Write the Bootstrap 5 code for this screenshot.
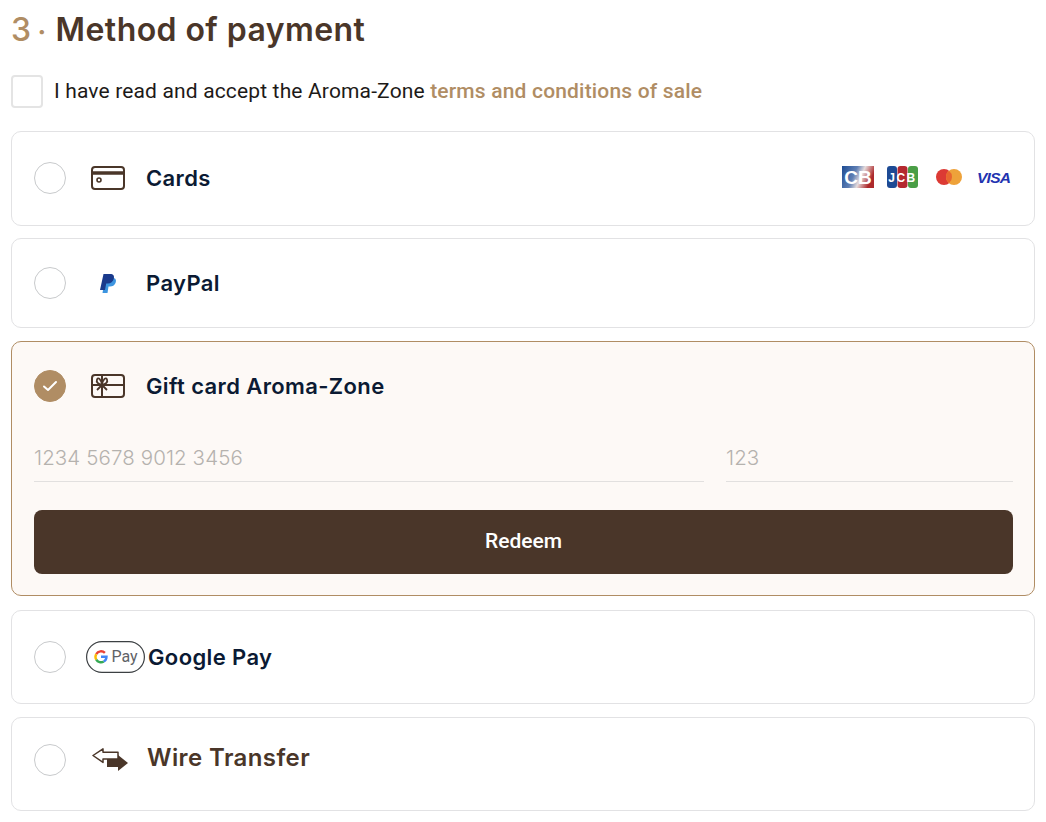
<!DOCTYPE html>
<html lang="en">
<head>
  <meta charset="UTF-8" />
  <meta name="viewport" content="width=device-width, initial-scale=1.0"/>
  <title>Method of payment</title>
  <link href="https://cdn.jsdelivr.net/npm/bootstrap@5.3.0/dist/css/bootstrap.min.css" rel="stylesheet">
  <style>
    body {
      background-color: #fff;
      padding: 0 11px;
      font-family: Roboto, sans-serif;
      color: #1d1a18;
    }
    .pay-title {
      height: 62px;
      margin: 0;
      font-family: Inter, sans-serif;
      font-size: 32px;
      font-weight: 600;
      color: #4a3629;
      letter-spacing: .42px;
      line-height: 60px;
    }
    .pay-step { color: #b08d64; font-weight: 500; }
    .pay-dot { color: #b08d64; margin: 0 9px 0 6px; font-weight: 700; font-size: 26px; }
    .terms-row { height: 32px; margin-top: 13px; margin-bottom: 24px; }
    .terms-box {
      width: 32px;
      height: 33px;
      border: 2px solid #e4e4e4;
      border-radius: 4px;
      margin-right: 11px;
    }
    .terms-text { font-size: 21px; letter-spacing: .15px; padding-top: 2px; }
    .terms-text a { color: #b08d64; font-weight: 500; text-decoration: none; letter-spacing: .18px; }
    .pay-item {
      border: 1px solid #e2e2e4;
      border-radius: 10px;
      padding: 0 21px 0 22px;
      margin-bottom: 12px;
    }
    .pay-h94 { height: 95px; padding-bottom: 1px; }
    .pay-h90 { height: 90px; margin-bottom: 13px; }
    .pay-h95 { height: 94px; margin-bottom: 13px; }
    .pay-wire { padding-bottom: 8px; }
    .pay-open {
      height: 255px;
      margin-bottom: 14px;
      background-color: #fdf9f6;
      border-color: #b08d64;
    }
    .open-head { height: 88px; }
    .pay-radio {
      width: 32px;
      height: 32px;
      flex: none;
      border: 1px solid #c8cacc;
      border-radius: 50%;
      background: #fff;
    }
    .pay-radio-on {
      background: #b08d64;
      border-color: #b08d64;
    }
    .icon-slot {
      width: 80px;
      flex: none;
      padding-left: 4px;
    }
    .slot-wire { padding-left: 8px; }
    .pay-label {
      font-family: Inter, sans-serif;
      font-size: 22px;
      font-weight: 600;
      color: #0b1a33;
      letter-spacing: .38px;
    }
    .label-wire { font-size: 24px; color: #4a3629; letter-spacing: .4px; margin-top: -5px; margin-left: 1px; }
    .gift-field {
      height: 52px;
      border: 0;
      border-bottom: 1px solid #e2e0df;
      background: transparent;
      padding: 4px 0 0;
      font-family: Inter, sans-serif;
      font-weight: 300;
      font-size: 20.5px;
      letter-spacing: .1px;
      outline: 0;
    }
    .gift-field::placeholder { color: #b5b2ae; opacity: 1; }
    .field-num { width: 670px; }
    .field-cvv { width: 287px; }
    .btn-redeem {
      height: 64px;
      margin-top: 28px;
      background-color: #4a3629;
      border: 0;
      border-radius: 8px;
      color: #fff;
      font-size: 21px;
      font-weight: 500;
    }
    .gpay-mark {
      width: 59px;
      height: 32px;
      flex: none;
      margin: 0 3px 0 20px;
    }
    .card-logos { margin-top: -3px; margin-right: 2px; }
    .card-logos svg { display: block; }
    .gap-jcb { margin-left: 13px; }
    .gap-mc { margin-left: 18px; }
    .gap-visa { margin-left: 16px; }
    .logo-text { font-family: "Liberation Sans", sans-serif; font-weight: 700; }
  </style>
</head>
<body>
  <h2 class="pay-title"><span class="pay-step">3</span><span class="pay-dot">·</span>Method of payment</h2>

  <div class="terms-row d-flex align-items-center">
    <div class="terms-box"></div>
    <div class="terms-text">I have read and accept the Aroma-Zone <a href="#">terms and conditions of sale</a></div>
  </div>

  <!-- Cards -->
  <div class="pay-item pay-h94 d-flex align-items-center">
    <div class="pay-radio"></div>
    <div class="icon-slot d-flex justify-content-center">
      <svg width="34" height="24" viewBox="0 0 34 24" fill="none" stroke="#4a3629" stroke-width="2">
        <rect x="1" y="1" width="32" height="22" rx="3"/>
        <path d="M1 7h32" stroke-width="3.500"/>
        <circle cx="8" cy="14" r="2" stroke-width="1.600"/>
      </svg>
    </div>
    <div class="pay-label">Cards</div>
    <div class="card-logos ms-auto d-flex align-items-center">
      <svg width="32" height="22" viewBox="0 0 32 22">
        <defs><linearGradient id="cbg" x1="0" x2="1" y1="0" y2="0.3"><stop offset="0" stop-color="#1c4b93"/><stop offset=".45" stop-color="#5f7fb4"/><stop offset=".68" stop-color="#e6dcdc"/><stop offset="1" stop-color="#ad2a2c"/></linearGradient></defs>
        <rect width="32" height="22" fill="url(#cbg)"/>
        <text class="logo-text" x="16" y="18" font-size="19" fill="#fff" text-anchor="middle">CB</text>
      </svg>
      <svg class="gap-jcb" width="31" height="22" viewBox="0 0 31 22">
        <rect width="10" height="22" rx="3" fill="#1d4a94"/>
        <rect x="10.500" width="10" height="22" rx="3" fill="#b4282f"/>
        <rect x="21" width="10" height="22" rx="3" fill="#4a9e46"/>
        <text class="logo-text" x="15.500" y="15.500" font-size="12" fill="#fff" text-anchor="middle" letter-spacing="1.500">JCB</text>
      </svg>
      <svg class="gap-mc" width="26" height="16" viewBox="0 0 26 16">
        <circle cx="8" cy="8" r="8" fill="#dc3a34"/>
        <circle cx="18" cy="8" r="8" fill="#eea23a"/>
        <path d="M13 1.750a8 8 0 0 1 0 12.500a8 8 0 0 1 0-12.500z" fill="#e8662f"/>
      </svg>
      <svg class="gap-visa" width="33" height="16" viewBox="0 0 33 16">
        <text class="logo-text" x="-1" y="13.500" font-size="15.500" font-style="italic" fill="#2233b0" textLength="34">VISA</text>
      </svg>
    </div>
  </div>

  <!-- PayPal -->
  <div class="pay-item pay-h90 d-flex align-items-center">
    <div class="pay-radio"></div>
    <div class="icon-slot d-flex justify-content-center">
      <svg width="16" height="19" viewBox="0 0 16 19">
        <path d="M5 4h8c3 0 3.500 2.500 2.500 5c-1 2.500-3 3.500-5.500 3.500H8.500L7.500 19H2.500z" fill="#3d95e0"/>
        <path d="M3.500 0h6.500c3.500 0 4.500 2 3.800 4.800c-.8 3.200-3 4.800-6 4.800H6.200L5 16H0z" fill="#1a3a8c"/>
      </svg>
    </div>
    <div class="pay-label">PayPal</div>
  </div>

  <!-- Gift card -->
  <div class="pay-item pay-open">
    <div class="open-head d-flex align-items-center">
      <div class="pay-radio pay-radio-on d-flex align-items-center justify-content-center">
        <svg width="16" height="12" viewBox="0 0 16 12" fill="none" stroke="#fff" stroke-width="2" stroke-linecap="round" stroke-linejoin="round">
          <path d="M2 6.500l4 3.500 8-8"/>
        </svg>
      </div>
      <div class="icon-slot d-flex justify-content-center">
        <svg width="34" height="26" viewBox="0 0 34 26" fill="none" stroke="#4a3629" stroke-width="2">
          <rect x="1" y="2" width="32" height="22" rx="3"/>
          <path d="M1 12h32M11 2v22"/>
          <path d="M11 12c-4-1-6-3-5-5.500s4-1 5 5.500c1-6.500 4-8 5-5.500s-1 4.500-5 5.500zM11 12l-5 5M11 12l5 5" stroke-width="1.800"/>
        </svg>
      </div>
      <div class="pay-label">Gift card Aroma-Zone</div>
    </div>
    <div class="d-flex justify-content-between">
      <input class="gift-field field-num" type="text" placeholder="1234 5678 9012 3456">
      <input class="gift-field field-cvv" type="text" placeholder="123">
    </div>
    <button class="btn btn-redeem w-100" type="button">Redeem</button>
  </div>

  <!-- Google Pay -->
  <div class="pay-item pay-h95 d-flex align-items-center">
    <div class="pay-radio"></div>
    <svg class="gpay-mark" viewBox="0 0 59 32">
      <rect x=".6" y=".6" width="57.800" height="30.800" rx="15.400" fill="#fff" stroke="#3c4043" stroke-width="1.200"/>
      <g fill="none" stroke-width="2.400">
        <path d="M10.240 13.050A5.500 5.500 0 0 1 18.890 11.910" stroke="#ea4335"/>
        <path d="M10.240 13.050A5.500 5.500 0 0 0 10.240 18.550" stroke="#fbbc04"/>
        <path d="M10.240 18.550A5.500 5.500 0 0 0 17.750 20.560" stroke="#34a853"/>
        <path d="M17.750 20.560A5.500 5.500 0 0 0 20.500 15.800H15" stroke="#4285f4"/>
      </g>
      <text x="25.500" y="21" font-family="Roboto, sans-serif" font-size="16" fill="#5f6368">Pay</text>
    </svg>
    <div class="pay-label">Google Pay</div>
  </div>

  <!-- Wire transfer -->
  <div class="pay-item pay-h95 pay-wire d-flex align-items-center">
    <div class="pay-radio"></div>
    <div class="icon-slot slot-wire d-flex justify-content-center">
      <svg width="36" height="24" viewBox="0 0 36 24">
        <path d="M1 7.500L11 .8v3.400h15v6.800h-15v3.400z" fill="none" stroke="#4a3629" stroke-width="1.500" stroke-linejoin="round"/>
        <path d="M15 11h11v-4l10 8l-10 8v-4h-11z" fill="#4a3629"/>
      </svg>
    </div>
    <div class="pay-label label-wire">Wire Transfer</div>
  </div>

  <script src="https://cdn.jsdelivr.net/npm/bootstrap@5.3.0/dist/js/bootstrap.bundle.min.js"></script>
</body>
</html>
